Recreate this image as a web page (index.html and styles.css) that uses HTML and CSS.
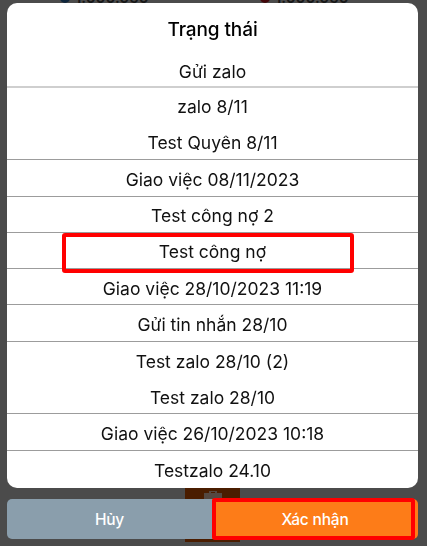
FILE: index.html
```html
<!DOCTYPE html>
<html lang="vi">
<head>
<meta charset="utf-8">
<title>Trạng thái</title>
<link rel="stylesheet" href="styles.css">
</head>
<body>
<div class="page">
  <div class="bg-top">
    <span class="stat"><i class="dot blue"></i>1.000.050</span>
    <span class="stat"><i class="dot red"></i>1.000.050</span>
  </div>
  <div class="bg-icon">
    <svg width="26" height="20" viewBox="0 0 26 20"><path d="M9 5V3h8v2h5v12H4V5z M11 5h4V4h-4z" fill="#ffffff" fill-rule="evenodd"/></svg>
  </div>
</div>
<div class="overlay">
  <div class="sheet">
    <div class="title">Trạng thái</div>
    <ul class="list">
      <li class="row first sep-light">Gửi zalo</li>
      <li class="row">zalo 8/11</li>
      <li class="row sep">Test Quyên 8/11</li>
      <li class="row sep">Giao việc 08/11/2023</li>
      <li class="row sep">Test công nợ 2</li>
      <li class="row sep">Test công nợ<span class="mark mark-row"></span></li>
      <li class="row sep">Giao việc 28/10/2023 11:19</li>
      <li class="row sep">Gửi tin nhắn 28/10</li>
      <li class="row">Test zalo 28/10 (2)</li>
      <li class="row sep">Test zalo 28/10</li>
      <li class="row sep">Giao việc 26/10/2023 10:18</li>
      <li class="row">Testzalo 24.10</li>
    </ul>
  </div>
  <div class="actions">
    <button class="btn cancel">Hủy</button>
    <button class="btn confirm">Xác nhận<span class="mark mark-btn"></span></button>
  </div>
</div>
</body>
</html>
```
FILE: styles.css
```css
* { box-sizing: border-box; }
html, body { margin: 0; padding: 0; }
body {
  width: 427px;
  height: 546px;
  overflow: hidden;
  background: #dcdcdc;
  font-family: Inter, "Noto Sans", "Liberation Sans", sans-serif;
}
.page {
  display: flex;
  flex-direction: column;
}
.bg-top {
  height: 4px;
  overflow: hidden;
  display: flex;
  align-items: flex-end;
  padding-left: 60px;
}
.stat {
  width: 200px;
  display: flex;
  align-items: center;
  gap: 5px;
  font-size: 15px;
  line-height: 12px;
  font-weight: 600;
  color: #444;
  flex: none;
}
.dot {
  width: 10px;
  height: 10px;
  border-radius: 50%;
  display: block;
}
.dot.blue { background: #2c6fb0; }
.dot.red { background: #c0121e; }
.bg-icon {
  margin-top: 483px;
  margin-left: 185px;
  width: 55px;
  height: 55px;
  background: #d85600;
  display: flex;
  justify-content: center;
  padding-top: 1px;
}
.bg-icon svg { display: block; opacity: 0.75; }

.overlay {
  position: fixed;
  inset: 0;
  background: rgba(0, 0, 0, 0.66);
  display: flex;
  flex-direction: column;
  padding: 3px 9px 0 7px;
}
.sheet {
  height: 485px;
  background: #ffffff;
  border-radius: 10px;
  overflow: hidden;
  flex: none;
}
.title {
  height: 48.2px;
  padding-top: 4px;
  display: flex;
  align-items: center;
  justify-content: center;
  font-size: 19px;
  letter-spacing: -0.1px;
  font-weight: 500;
  color: #000;
}
.list {
  list-style: none;
  margin: 0;
  padding: 0;
}
.row {
  position: relative;
  height: 36.33px;
  display: flex;
  align-items: center;
  justify-content: center;
  font-size: 17.5px;
  color: #111;
  padding-top: 2.5px;
}
.row.first { padding-top: 7px; }
.sep { border-bottom: 1px solid #9c9c9c; }
.sep-light { border-bottom: 2px solid #cfcfcf; }

.mark {
  position: absolute;
  border: 4px solid #ff0000;
  border-radius: 3px;
  pointer-events: none;
}
.mark-row {
  left: 55px;
  top: 0;
  width: 292px;
  height: 40px;
}
.actions {
  margin-top: 11px;
  height: 40px;
  display: flex;
  flex: none;
}
.btn {
  position: relative;
  border: 0;
  margin: 0;
  padding: 0;
  color: #ffffff;
  font-family: inherit;
  font-size: 15.5px;
  letter-spacing: -0.2px;
  font-weight: 500;
  display: flex;
  align-items: center;
  justify-content: center;
}
.cancel {
  flex: 0 0 205px;
  background: #8a9eac;
  border-radius: 5px 0 0 5px;
}
.confirm {
  flex: 1;
  background: #fd7c18;
  border-radius: 0 5px 5px 0;
}
.mark-btn {
  left: 0;
  top: -1px;
  width: 203px;
  height: 42px;
}
```
